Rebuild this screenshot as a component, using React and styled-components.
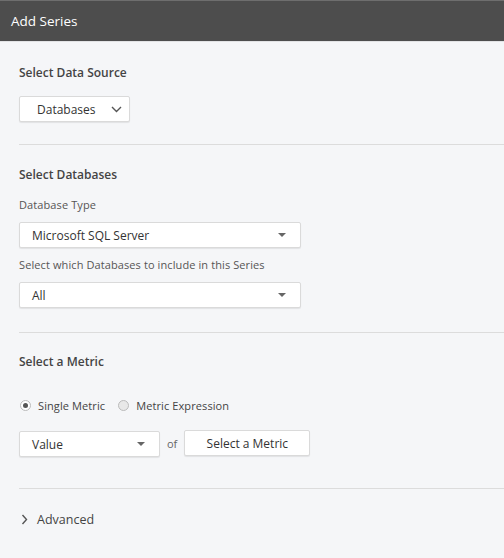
import React from "react";
import styled, { createGlobalStyle } from "styled-components";

const Global = createGlobalStyle`
  html, body { margin: 0; padding: 0; background: #f5f6f8; }
  body { font-family: "Open Sans", "Liberation Sans", sans-serif; color: #333; }
  * { box-sizing: border-box; }
`;

const Page = styled.div`
  width: 504px;
  height: 558px;
  background: #f5f6f8;
  overflow: hidden;
`;

const Header = styled.div`
  height: 42px;
  background: #4d4d4d;
  border-top: 1px solid #6e6e6e;
  border-bottom: 1px solid #e2e3e5;
  color: #fff;
  font-size: 13.5px;
  display: flex;
  align-items: center;
  padding-left: 11px;
`;

const Body = styled.div`
  padding-left: 19px;
`;

const Section = styled.div`
  padding: ${(p) => p.$pad || "22px 0 22px"};
  border-bottom: 1px solid #dcdcdc;
`;

const SectionTitle = styled.div`
  font-size: 12px;
  font-weight: 600;
  color: #444;
  line-height: 16px;
  margin-bottom: ${(p) => p.$mb || "18px"};
`;

const FieldLabel = styled.div`
  font-size: 11px;
  letter-spacing: 0.1px;
  color: #555;
  line-height: 14px;
  margin-bottom: 10px;
`;

const Box = styled.div`
  height: 26px;
  width: ${(p) => p.$w}px;
  background: #fff;
  border: 1px solid #dadada;
  border-radius: 2px;
  box-shadow: 0 1px 1px rgba(0, 0, 0, 0.08);
  font-size: 12px;
  color: #333;
  display: flex;
  align-items: center;
  justify-content: space-between;
  padding: 0 11px 0 12px;
  margin-bottom: ${(p) => p.$mb || "0"};
  margin-top: ${(p) => p.$mt || "0"};
`;

const SourceButton = styled(Box)`
  justify-content: flex-start;
  gap: 15px;
  padding: 0 0 0 17px;
`;

const MetricButton = styled(Box)`
  justify-content: center;
  padding: 0;
`;

const Caret = styled.span`
  width: 0;
  height: 0;
  border-left: 4px solid transparent;
  border-right: 4px solid transparent;
  border-top: 4px solid #666;
  margin-right: 3px;
`;

const RadioRow = styled.div`
  display: flex;
  align-items: center;
  font-size: 11px;
  letter-spacing: 0.1px;
  color: #444;
  height: 16px;
  margin-bottom: 17px;
`;

const Radio = styled.span`
  width: 11px;
  height: 11px;
  border-radius: 50%;
  border: 1px solid #bbb;
  background: ${(p) => (p.$on ? "#fff" : "#e8e8e8")};
  display: inline-flex;
  align-items: center;
  justify-content: center;
  margin: 0 7px 0 1px;
  &::after {
    content: "";
    width: 5px;
    height: 5px;
    border-radius: 50%;
    background: ${(p) => (p.$on ? "#555" : "transparent")};
  }
`;

const RadioLabel = styled.span`
  margin-right: 12px;
`;

const MetricRow = styled.div`
  display: flex;
  align-items: flex-start;
`;

const Of = styled.span`
  font-size: 11px;
  color: #666;
  line-height: 26px;
  margin: 1px 7px 0 7px;
`;

const Advanced = styled.div`
  display: flex;
  align-items: center;
  font-size: 12.5px;
  color: #444;
  padding-top: 22px;
  gap: 9px;
  padding-left: 2px;
`;

export default function App() {
  return (
    <Page>
      <Global />
      <Header>Add Series</Header>
      <Body>
        <Section $pad="23px 0 22px">
          <SectionTitle $mb="15px">Select Data Source</SectionTitle>
          <SourceButton $w={111}>
            <span>Databases</span>
            <svg width="11" height="7" viewBox="0 0 11 7">
              <path d="M1 1l4.5 4.5L10 1" fill="none" stroke="#555" strokeWidth="1.4" />
            </svg>
          </SourceButton>
        </Section>
        <Section $pad="22px 0 24px">
          <SectionTitle $mb="15px">Select Databases</SectionTitle>
          <FieldLabel>Database Type</FieldLabel>
          <Box $w={282} $mb="10px">
            <span>Microsoft SQL Server</span>
            <Caret />
          </Box>
          <FieldLabel>Select which Databases to include in this Series</FieldLabel>
          <Box $w={282}>
            <span>All</span>
            <Caret />
          </Box>
        </Section>
        <Section $pad="21px 0 31px">
          <SectionTitle $mb="27px">Select a Metric</SectionTitle>
          <RadioRow>
            <Radio $on />
            <RadioLabel>Single Metric</RadioLabel>
            <Radio />
            <RadioLabel>Metric Expression</RadioLabel>
          </RadioRow>
          <MetricRow>
            <Box $w={141} $mt="1px">
              <span>Value</span>
              <Caret />
            </Box>
            <Of>of</Of>
            <MetricButton $w={126}>Select a Metric</MetricButton>
          </MetricRow>
        </Section>
        <Advanced>
          <svg width="7" height="11" viewBox="0 0 7 11">
            <path d="M1.5 1l4 4.5-4 4.5" fill="none" stroke="#555" strokeWidth="1.4" />
          </svg>
          Advanced
        </Advanced>
      </Body>
    </Page>
  );
}
